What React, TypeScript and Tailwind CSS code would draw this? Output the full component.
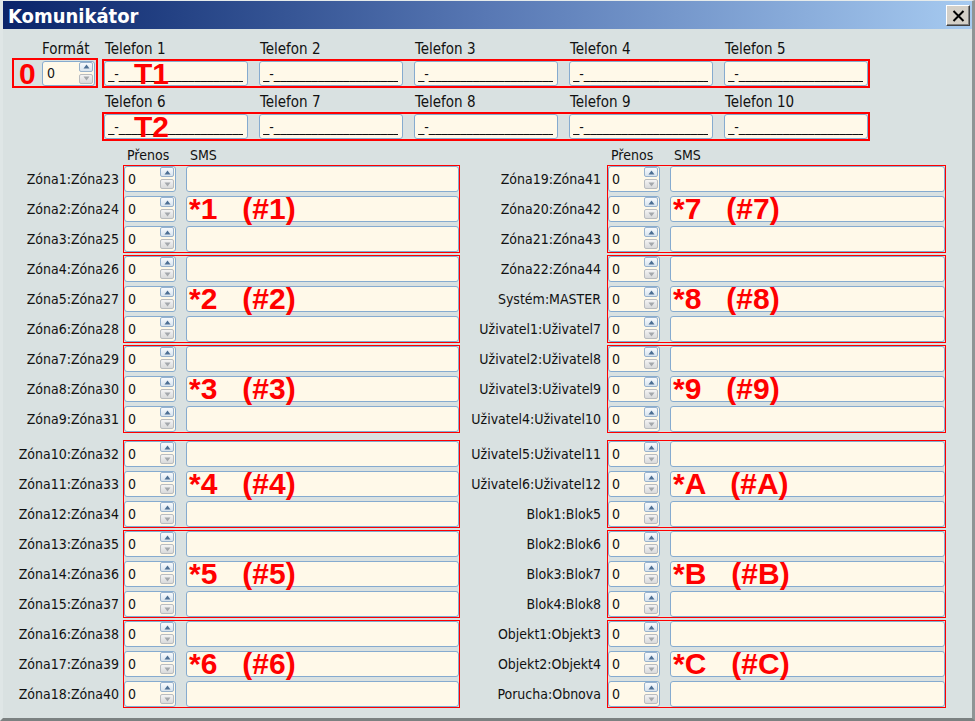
import React from 'react';

const UI = "font-[family-name:'DejaVu_Sans_Condensed','Liberation_Sans',sans-serif]";
const RED =
  "font-[family-name:'Liberation_Sans',Arial,sans-serif] font-bold text-[30px] leading-none text-[#ff0000] whitespace-pre";

const Arrow = ({ up, color }: { up: boolean; color: string }) => (
  <svg width="7" height="5" viewBox="0 0 7 5">
    <path d={up ? 'M3.5 0.5 L6.5 4.5 H0.5 Z' : 'M0.5 0.5 H6.5 L3.5 4.5 Z'} fill={color} />
  </svg>
);

const Spinner = ({ className, pad }: { className: string; pad: string }) => (
  <div className={`flex rounded-[3px] border border-[#86abcf] bg-[#fff9e9] ${className}`}>
    <span className={`flex-1 flex items-center text-[14px] ${pad}`}>0</span>
    <div className="flex flex-col gap-[2px] pr-[1px]">
      <div className="w-[14px] h-[10px] rounded-[2px] border border-[#98b2cc] bg-linear-to-b from-[#f7fafd] to-[#d9e4ee] flex items-center justify-center">
        <Arrow up color="#4d6f94" />
      </div>
      <div className="w-[14px] h-[10px] rounded-[2px] border border-[#b9bcbf] bg-linear-to-b from-[#f4f4f4] to-[#d9dadb] flex items-center justify-center">
        <Arrow up={false} color="#a4a8ac" />
      </div>
    </div>
  </div>
);

const PhoneInput = () => (
  <div className="w-[144px] h-[25px] rounded-[3px] border border-[#86abcf] bg-[#fff9e9] pl-[3px] pr-[4px] flex items-center">
    <div className="overflow-hidden whitespace-nowrap text-[14px] leading-[16px]">
      _-____________________________________
    </div>
  </div>
);

const PhoneRow = ({ from, tag, first }: { from: number; tag: string; first?: boolean }) => (
  <div>
    <div className={`flex h-[16px] leading-[16px] text-[15px] pl-[3px] ${first ? '' : 'mt-[6px]'}`}>
      {[0, 1, 2, 3, 4].map((i) => (
        <div key={i} className="w-[155px]">Telefon {from + i}</div>
      ))}
    </div>
    <div className="relative mt-[2px] border-2 border-[#ff0000] flex gap-[11px] w-[768px]">
      {[0, 1, 2, 3, 4].map((i) => (
        <PhoneInput key={i} />
      ))}
      <span className={`absolute left-[30px] top-[-2px] ${RED}`}>{tag}</span>
    </div>
  </div>
);

const leftLabels = Array.from({ length: 18 }, (_, i) => `Zóna${i + 1}:Zóna${i + 23}`);
const rightLabels = [
  'Zóna19:Zóna41',
  'Zóna20:Zóna42',
  'Zóna21:Zóna43',
  'Zóna22:Zóna44',
  'Systém:MASTER',
  'Uživatel1:Uživatel7',
  'Uživatel2:Uživatel8',
  'Uživatel3:Uživatel9',
  'Uživatel4:Uživatel10',
  'Uživatel5:Uživatel11',
  'Uživatel6:Uživatel12',
  'Blok1:Blok5',
  'Blok2:Blok6',
  'Blok3:Blok7',
  'Blok4:Blok8',
  'Objekt1:Objekt3',
  'Objekt2:Objekt4',
  'Porucha:Obnova',
];

const Column = ({
  labels,
  marks,
  labelW,
  gap,
  boxW,
  smsW,
}: {
  labels: string[];
  marks: string[];
  labelW: string;
  gap: string;
  boxW: string;
  smsW: string;
}) => (
  <div className="flex flex-col">
    <div className="flex h-[16px] leading-[16px]">
      <div className={`${labelW} ${gap}`} />
      <div className="w-[63px] pl-[4px]">Přenos</div>
      <div className="pl-[4px]">SMS</div>
    </div>
    {marks.map((mark, g) => (
      <div key={g} className={`flex ${g === 3 ? 'mt-[7px]' : 'mt-[2px]'}`}>
        <div className={`${labelW} flex flex-col gap-[4px] pt-[1px]`}>
          {labels.slice(g * 3, g * 3 + 3).map((l) => (
            <div key={l} className="h-[26px] flex items-center justify-end whitespace-nowrap">
              {l}
            </div>
          ))}
        </div>
        <div className={`${gap} ${boxW} h-[88px] border border-[#ff0000] flex flex-col gap-[4px]`}>
          {[0, 1, 2].map((r) => (
            <div key={r} className="flex h-[26px]">
              <Spinner className="w-[52px] h-[26px]" pad="pl-[3px]" />
              <div className={`relative ml-[10px] ${smsW} h-[26px] rounded-[3px] border border-[#86abcf] bg-[#fff9e9]`}>
                {r === 1 && <span className={`absolute left-[2px] top-[-3px] ${RED}`}>{mark}</span>}
              </div>
            </div>
          ))}
        </div>
      </div>
    ))}
  </div>
);

export default function App() {
  return (
    <div
      className={`w-[975px] h-[721px] bg-[#d9e1e1] border-t border-t-[#e6ebeb] border-l-[3px] border-l-[#dfe6e6] border-r-[3px] border-r-[#8e9595] border-b-[3px] border-b-[#7b8181] overflow-hidden ${UI} text-[14px] text-[#111]`}
    >
      {/* Title bar */}
      <div className="h-[28px] bg-linear-to-r from-[#0a246a] via-[#5878b4] to-[#a6caf0] flex items-start justify-between pl-[5px] pr-[2px]">
        <div className="pt-[5px] text-white font-bold text-[20px] leading-[20px]">Komunikátor</div>
        <div className="mt-[4px] w-[24px] h-[21px] bg-[#d4d0c8] border border-t-white border-l-white border-r-[#404040] border-b-[#404040] shadow-[inset_-1px_-1px_0_#808080] flex items-center justify-center">
          <svg width="13" height="12" viewBox="0 0 13 12">
            <path d="M1.5 1 L11.5 11 M11.5 1 L1.5 11" stroke="#000" strokeWidth="2" />
          </svg>
        </div>
      </div>

      {/* Formát + telefony */}
      <div className="flex pt-[12px]">
        <div className="ml-[9px] w-[86px]">
          <div className="h-[16px] leading-[16px] text-[15px] pl-[30px]">Formát</div>
          <div className="relative mt-[1px] h-[30px] border-2 border-[#ff0000] flex items-center pl-[28px]">
            <span className={`absolute left-[5px] top-[-1px] ${RED}`}>0</span>
            <Spinner className="w-[53px] h-[25px]" pad="pl-[4px]" />
          </div>
        </div>
        <div className="ml-[4px]">
          <PhoneRow from={1} tag="T1" first />
          <PhoneRow from={6} tag="T2" />
        </div>
      </div>

      {/* Zóny */}
      <div className="flex mt-[6px]">
        <Column
          labels={leftLabels}
          marks={['*1   (#1)', '*2   (#2)', '*3   (#3)', '*4   (#4)', '*5   (#5)', '*6   (#6)']}
          labelW="w-[116px]"
          gap="ml-[4px]"
          boxW="w-[337px]"
          smsW="w-[273px]"
        />
        <Column
          labels={rightLabels}
          marks={['*7   (#7)', '*8   (#8)', '*9   (#9)', '*A   (#A)', '*B   (#B)', '*C   (#C)']}
          labelW="w-[141px]"
          gap="ml-[6px]"
          boxW="w-[339px]"
          smsW="w-[275px]"
        />
      </div>
    </div>
  );
}
